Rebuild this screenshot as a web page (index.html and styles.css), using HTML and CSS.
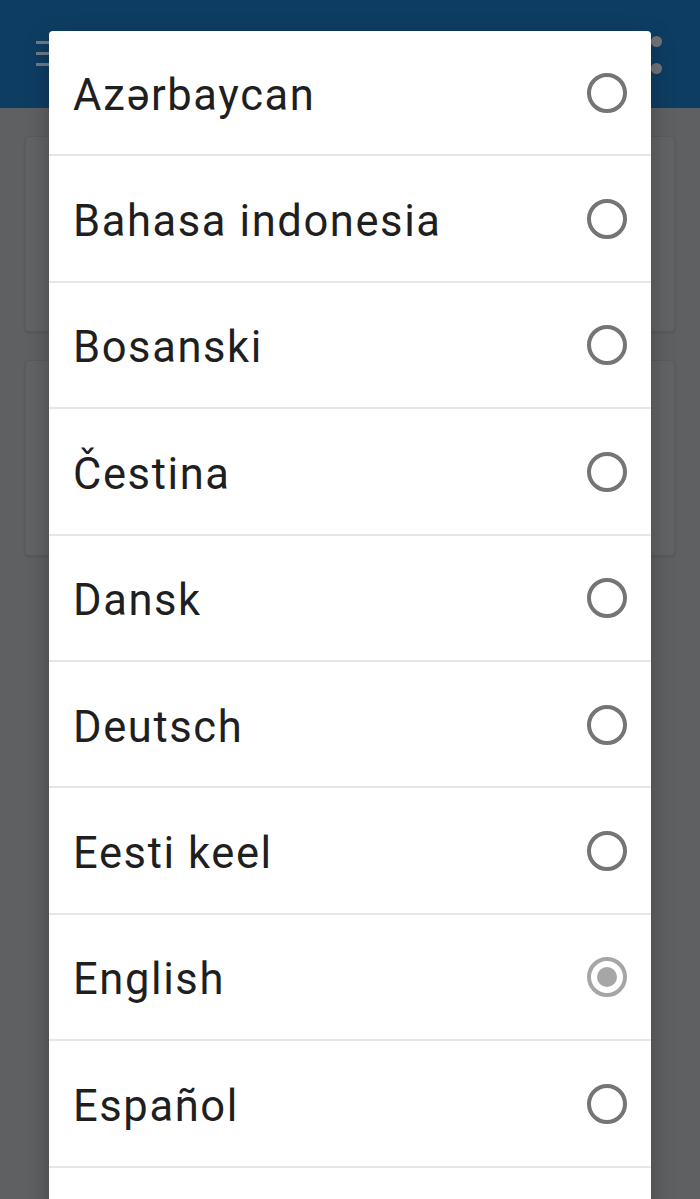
FILE: index.html
```html
<!DOCTYPE html>
<html lang="en">
<head>
  <meta charset="UTF-8" />
  <title>Language</title>
  <meta name="viewport" content="width=device-width, initial-scale=1" />
  <link rel="stylesheet" href="styles.css">
</head>
<body>
  <div class="app">
    <header class="app-bar">
      <div class="menu-icon"><span></span><span></span><span></span></div>
      <div class="more-icon"><span></span><span></span></div>
    </header>
    <main class="content">
      <div class="card"></div>
      <div class="card"></div>
    </main>
  </div>

  <div class="dialog">
    <div class="option"><span class="label">Azərbaycan</span><span class="radio"></span></div>
    <div class="option"><span class="label">Bahasa indonesia</span><span class="radio"></span></div>
    <div class="option"><span class="label">Bosanski</span><span class="radio"></span></div>
    <div class="option"><span class="label">Čestina</span><span class="radio"></span></div>
    <div class="option"><span class="label">Dansk</span><span class="radio"></span></div>
    <div class="option"><span class="label">Deutsch</span><span class="radio"></span></div>
    <div class="option"><span class="label">Eesti keel</span><span class="radio"></span></div>
    <div class="option"><span class="label">English</span><span class="radio checked"></span></div>
    <div class="option"><span class="label">Español</span><span class="radio"></span></div>
    <div class="option"><span class="label"></span></div>
  </div>
</body>
</html>
```

FILE: styles.css
```css
html, body {
  margin: 0;
  height: 100%;
  overflow: hidden;
}
body {
  background: #5f6062;
  font-family: Roboto, 'Noto Sans', Arial, sans-serif;
}
.app-bar {
  height: 108px;
  background: #0e3d63;
  display: flex;
  justify-content: space-between;
  align-items: flex-start;
  padding: 0 0 0 36px;
  box-sizing: border-box;
}
.menu-icon {
  display: flex;
  flex-direction: column;
  gap: 8px;
  margin-top: 41px;
}
.menu-icon span {
  display: block;
  width: 22px;
  height: 3px;
  background: #6f7b86;
}
.more-icon {
  display: flex;
  flex-direction: column;
  gap: 16px;
  margin: 36px 38px 0 0;
}
.more-icon span {
  display: block;
  width: 11px;
  height: 11px;
  border-radius: 50%;
  background: #717477;
}
.content {
  padding: 28px 25px;
  display: flex;
  flex-direction: column;
  gap: 28px;
}
.card {
  height: 194px;
  background: #626365;
  border: 1px solid #5a5b5d;
  border-radius: 4px;
  box-shadow: 0 1px 2px rgba(0,0,0,0.12);
}

.dialog {
  position: absolute;
  left: 49px;
  top: 31px;
  width: 602px;
  background: #fff;
  border-radius: 4px 4px 0 0;
  box-shadow: 0 8px 24px rgba(0,0,0,0.25);
}
.option {
  height: 126.4px;
  box-sizing: border-box;
  border-bottom: 2px solid #e6e6e6;
  display: flex;
  align-items: center;
  justify-content: space-between;
  padding: 1px 24px 0 24px;
}
.option:first-child {
  height: 125.4px;
}
.label {
  font-size: 43.5px;
  color: #1f1f1f;
  letter-spacing: 1.6px;
  padding-top: 5px;
}
.radio {
  width: 40px;
  height: 40px;
  box-sizing: border-box;
  border: 4px solid #757575;
  border-radius: 50%;
  display: flex;
  align-items: center;
  justify-content: center;
}
.radio.checked {
  border-color: #a6a6a6;
}
.radio.checked::after {
  content: "";
  width: 20px;
  height: 20px;
  border-radius: 50%;
  background: #a6a6a6;
}
```
